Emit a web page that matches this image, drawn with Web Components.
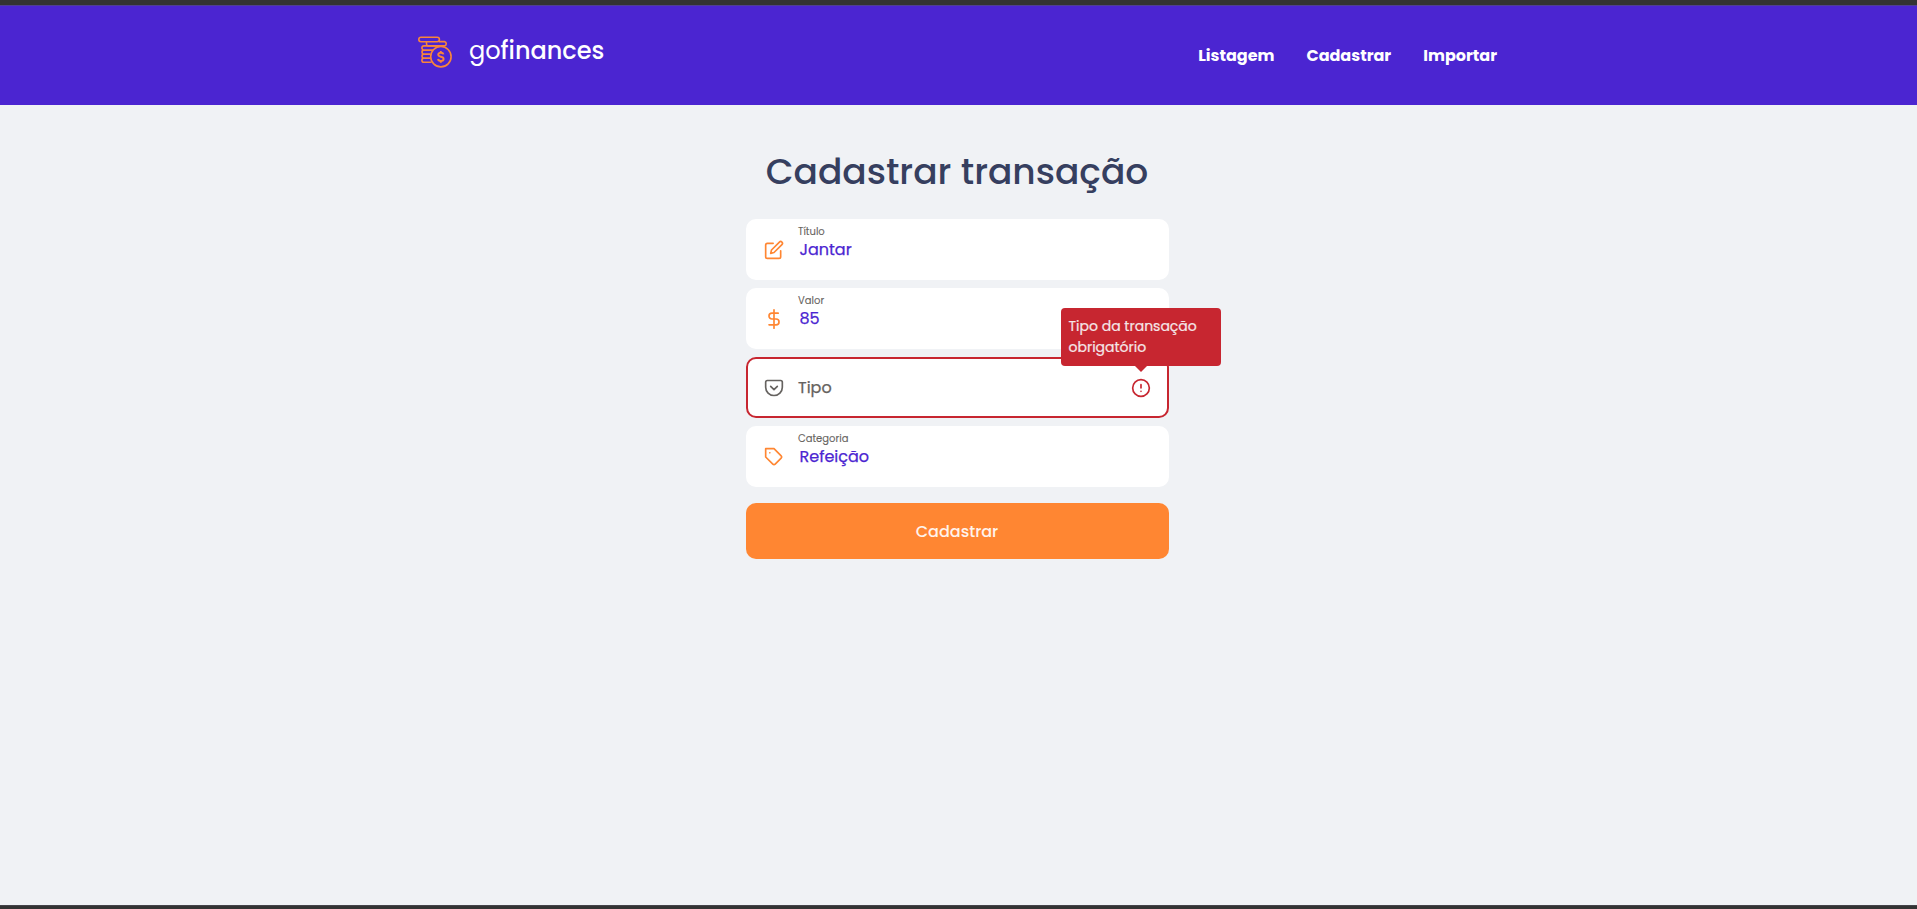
<!DOCTYPE html>
<html lang="pt-BR">
<head>
<meta charset="utf-8">
<title>gofinances</title>
<style>
html,body{margin:0;height:100%}
body{background:#f0f2f5;font-family:Poppins,Inter,"Open Sans",sans-serif;font-size:16px;overflow:hidden}
</style>
</head>
<body>
<fin-app></fin-app>
<script>
const define = (name, html, ready) => {
  const t = document.createElement('template');
  t.innerHTML = html;
  customElements.define(name, class extends HTMLElement {
    connectedCallback() {
      if (this.shadowRoot) return;
      this.attachShadow({mode: 'open'}).append(t.content.cloneNode(true));
      if (ready) ready(this, this.shadowRoot);
    }
  });
};

const icons = {
  edit: '<path d="M11 4H4a2 2 0 0 0-2 2v14a2 2 0 0 0 2 2h14a2 2 0 0 0 2-2v-7"/><path d="M18.500 2.500a2.121 2.121 0 0 1 3 3L12 15l-4 1 1-4 9.500-9.500z"/>',
  dollar: '<path d="M12 1v22M17 5H9.500a3.500 3.500 0 0 0 0 7h5a3.500 3.500 0 0 1 0 7H6"/>',
  pocket: '<path d="M4 3h16a2 2 0 0 1 2 2v6a10 10 0 0 1-20 0V5a2 2 0 0 1 2-2z"/><path d="M8 10l4 4 4-4"/>',
  tag: '<path d="M20.590 13.410l-7.170 7.170a2 2 0 0 1-2.830 0L2 12V2h10l8.590 8.590a2 2 0 0 1 0 2.820z"/><path d="M7 7h.01"/>',
  alert: '<circle cx="12" cy="12" r="10"/><path d="M12 8v4M12 16h.01"/>'
};
define('fin-icon', `
<style>:host{display:block;width:20px;height:20px;flex:none}
svg{display:block;fill:none;stroke:currentColor;stroke-width:2;stroke-linecap:round;stroke-linejoin:round}</style>
<svg width="20" height="20" viewBox="0 0 24 24"></svg>`, (el, root) => {
  root.querySelector('svg').innerHTML = icons[el.getAttribute('name')];
});

define('fin-logo', `
<style>
:host{display:flex;align-items:flex-start}
svg{display:block;flex:none;margin-right:16px}
.word{font-size:24px;line-height:40px;color:#fff;margin-top:-4px;white-space:nowrap}
.b{font-weight:500}
</style>
<svg width="36" height="34" viewBox="0 -.4 36 34" fill="none" stroke="#f9853a" stroke-width="1.600">
<rect x="1.800" y="1.800" width="20.600" height="4.500" rx="2.200"/>
<path d="M9.500 6.300v2a2.200 2.200 0 0 0 1.500 2.200H27.500a2.200 2.200 0 0 0 0-4.300H22"/>
<path d="M11 10.500H7a2 2 0 0 0 0 4.200h9M7 14.700a2 2 0 0 0 0 4h6.500M7 18.700a2 2 0 0 0 0 4h6M7 22.700a2 2 0 0 0 0 4.200h7.500M11 10.500h10"/>
<circle cx="23.900" cy="21.300" r="10.200"/>
<path d="M26.500 19q-.4-1.700-2.700-1.700t-2.600 1.900c0 1.300 1 1.800 2.600 2.100s2.800.8 2.800 2.200-1 2-2.800 2-2.600-.7-2.800-1.900M23.800 15.500v1.800M23.800 25.500v1.800" stroke-width="1.900"/>
</svg>
<div class="word">go<span class="b">finances</span></div>`);

define('fin-header', `
<style>
:host{display:block;box-sizing:border-box;height:105px;background:#4b25d1;border-top:5px solid #333;box-shadow:inset 0 1px #4f3f92;padding:30px 0 0 417px}
.row{display:flex;width:1080px;justify-content:space-between}
nav{display:flex;gap:32px;margin-top:5px}
a{color:#fff;font-weight:700;font-size:16px;line-height:31px;text-decoration:none}
</style>
<div class="row"><fin-logo></fin-logo>
<nav><a>Listagem</a><a>Cadastrar</a><a>Importar</a></nav></div>`);

define('fin-field', `
<style>
:host{display:flex;align-items:center;position:relative;box-sizing:border-box;height:61px;border:2px solid #fff;border-radius:10px;background:#fff;padding:0 16px;color:#ff8632}
:host([error]){border-color:#c72630;color:#666360}
fin-icon{margin-right:14px}
.text{flex:1;-webkit-text-stroke:.25px currentColor}
.label{font-size:10px;line-height:13px;color:#666360;margin-top:-12px;-webkit-text-stroke-width:.1px}
.value{font-size:16px;line-height:24px;color:#4b25d1;padding-left:1.500px}
:host([error]) .label{font-size:16px;line-height:24px;margin-top:0;-webkit-text-stroke-width:.25px}
:host([error]) .value{display:none}
</style>
<fin-icon></fin-icon>
<div class="text"><div class="label"></div><div class="value"></div></div><slot></slot>`, (el, root) => {
  const icon = document.createElement('fin-icon');
  icon.setAttribute('name', el.getAttribute('icon'));
  root.querySelector('fin-icon').replaceWith(icon);
  root.querySelector('.label').textContent = el.getAttribute('label');
  root.querySelector('.value').textContent = el.getAttribute('value') || '';
});

define('fin-error', `
<style>
:host{display:block;position:relative;color:#c72630}
.tip{position:absolute;z-index:2;bottom:32px;left:50%;transform:translateX(-50%);box-sizing:border-box;width:160px;height:58px;padding:8px 8px 8px 7.500px;background:#c72630;border-radius:4px;color:#f5e6e8;font-size:14px;line-height:21px;-webkit-text-stroke:.2px currentColor}
.tip::after{content:"";position:absolute;top:100%;left:50%;transform:translateX(-50%);border:solid transparent;border-width:6px 6px 0;border-top-color:#c72630}
</style>
<fin-icon name="alert"></fin-icon>
<div class="tip">Tipo da transação obrigatório</div>`);

define('fin-form', `
<style>
:host{display:block;width:423px;margin:0 auto;padding-right:2px}
h1{margin:0 1px 0 0;padding:40px 0 20px;font-size:36px;line-height:54px;font-weight:500;color:#363f5f;text-align:center}
.fields{display:grid;gap:8px}
button{display:flex;justify-content:center;align-items:center;width:100%;height:56px;margin:16px 0 0;padding:1px 1px 0 0;border:0;border-radius:10px;background:#ff8632;color:#fff3ec;font:500 16px/24px Poppins,Inter,"Open Sans",sans-serif}
</style>
<h1>Cadastrar transação</h1>
<div class="fields">
<fin-field icon="edit" label="Título" value="Jantar"></fin-field>
<fin-field icon="dollar" label="Valor" value="85"></fin-field>
<fin-field error icon="pocket" label="Tipo"><fin-error></fin-error></fin-field>
<fin-field icon="tag" label="Categoria" value="Refeição"></fin-field>
</div>
<button>Cadastrar</button>`);

define('fin-app', `
<style>:host{display:flex;flex-direction:column;height:909px}main{flex:1}
footer{height:4px;box-sizing:border-box;background:#333;border-top:1px solid #444349}</style>
<fin-header></fin-header><main><fin-form></fin-form></main><footer></footer>`);
</script>
</body>
</html>
